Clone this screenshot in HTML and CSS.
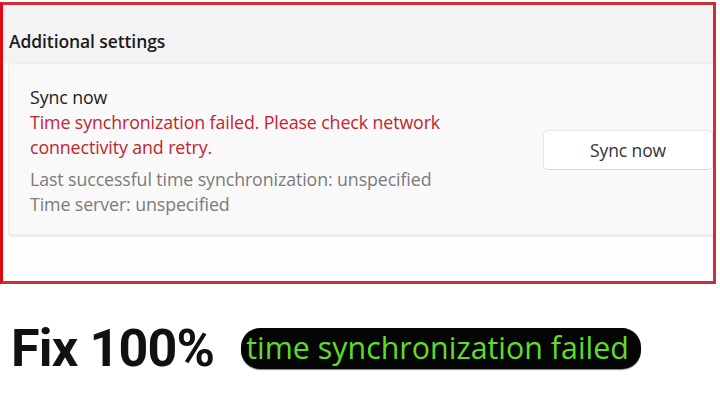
FILE: index.html
```html
<!DOCTYPE html>
<html>
<head>
<meta charset="utf-8">
<link rel="stylesheet" href="styles.css">
</head>
<body>
<div class="frame">
  <div class="header">Additional settings</div>
  <div class="card">
    <div class="info">
      <div class="title">Sync now</div>
      <div class="error">Time synchronization failed. Please check network<br>connectivity and retry.</div>
      <div class="meta">Last successful time synchronization: unspecified<br>Time server: unspecified</div>
    </div>
    <button class="btn">Sync now</button>
  </div>
</div>
<div class="promo">
  <span class="fix">Fix 100%</span>
  <span class="pill">time synchronization failed</span>
</div>
</body>
</html>
```

FILE: styles.css
```css
html, body {
  margin: 0;
  padding: 0;
  background: #ffffff;
}
body {
  width: 720px;
  height: 404px;
  overflow: hidden;
  font-family: "Open Sans", "Noto Sans", sans-serif;
}
.frame {
  box-sizing: border-box;
  margin-top: 2px;
  width: 716px;
  height: 282px;
  border: 3px solid #c9303a;
  border-left: 3px solid #e3070f;
  background: #fdfdfd;
}
.header {
  box-sizing: border-box;
  height: 58px;
  background: #f3f3f3;
  padding: 26px 0 0 6px;
  font-weight: 600;
  font-size: 17.5px;
  color: #1b1b1b;
  letter-spacing: -0.1px;
  line-height: 20px;
}
.card {
  box-sizing: border-box;
  margin-left: 5px;
  height: 174px;
  background: #f9f9f9;
  border: 1px solid #ececec;
  border-right: none;
  border-bottom: 3px solid #ececec;
  border-radius: 4px 0 0 4px;
  display: flex;
  align-items: center;
  padding-left: 21px;
}
.info {
  flex: 1;
  font-size: 17.8px;
  line-height: 25px;
  letter-spacing: -0.1px;
  padding-top: 4px;
}
.title {
  color: #222;
}
.error {
  color: #c4242c;
}
.meta {
  margin-top: 7px;
  color: #7b7b7b;
}
.btn {
  box-sizing: border-box;
  width: 170px;
  height: 40px;
  margin-top: 2px;
  background: #ffffff;
  border: 1px solid #e6e6e6;
  border-bottom-color: #d8d8d8;
  border-radius: 5px;
  font-family: "Open Sans", "Noto Sans", sans-serif;
  font-size: 17.5px;
  letter-spacing: -0.1px;
  color: #333;
}
.promo {
  display: flex;
  align-items: center;
  margin-top: 44px;
  padding-left: 11px;
  gap: 27px;
}
.fix {
  font-family: "Roboto", sans-serif;
  font-weight: 700;
  font-size: 52px;
  line-height: 41px;
  color: #111;
  letter-spacing: -0.8px;
}
.pill {
  box-sizing: border-box;
  height: 41px;
  width: 400px;
  background: #050505;
  border-radius: 19px;
  padding-left: 5px;
  font-family: "Open Sans", sans-serif;
  font-size: 30.4px;
  line-height: 40px;
  color: #5fdc2a;
  letter-spacing: 0;
  box-shadow: 0 1px 1px #888;
}
```
